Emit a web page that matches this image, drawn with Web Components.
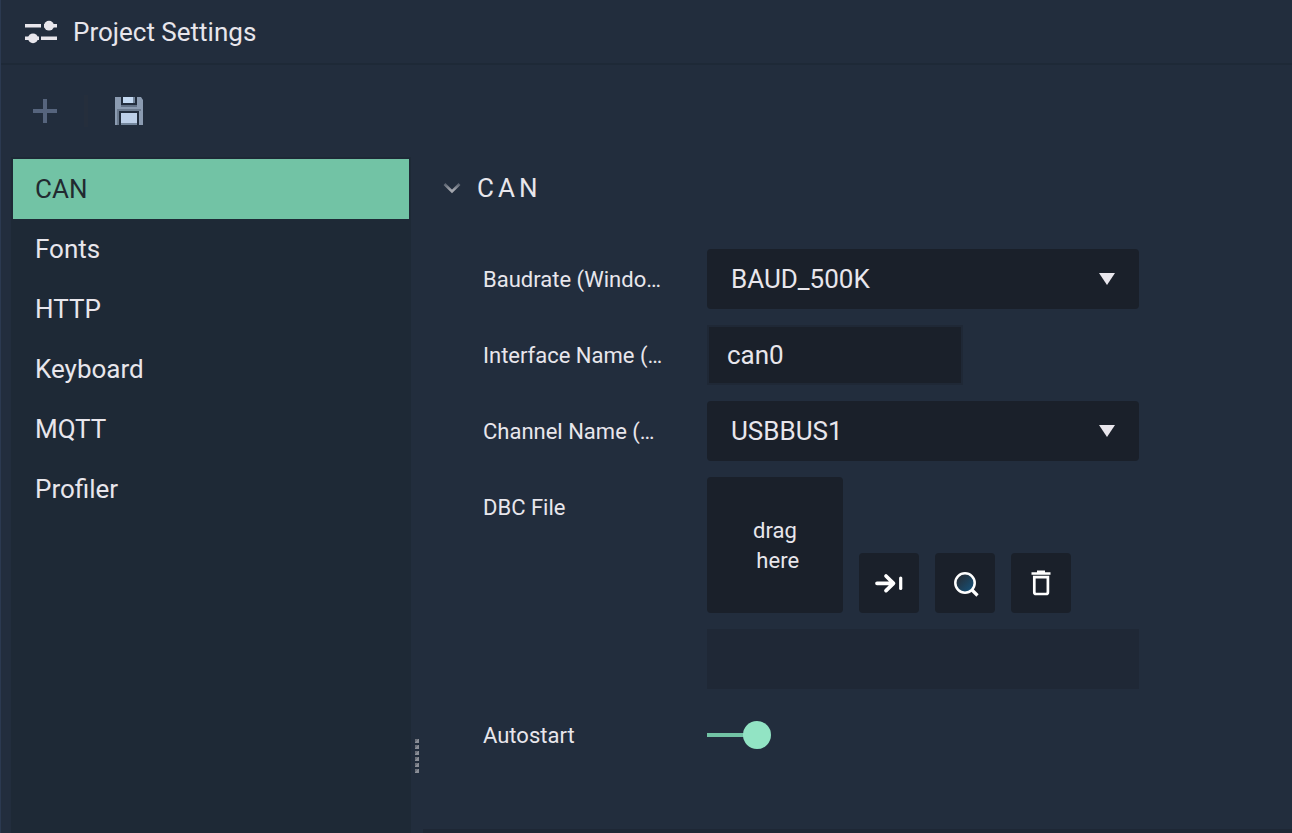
<!DOCTYPE html>
<html lang="en">
<head>
<meta charset="utf-8">
<title>Project Settings</title>
<style>
  :root {
    --bg: #222d3d;
    --panel: #1e2936;
    --field: #1a202a;
    --line: #1e2937;
    --text: #e8e6ec;
    --accent: #72c3a5;
    --accent-bright: #92e4c4;
  }
  html, body { height: 100%; }
  body {
    margin: 0;
    background: var(--bg);
    color: var(--text);
    font-family: Roboto, "Liberation Sans", sans-serif;
    font-size: 26px;
    line-height: 30px;
  }
</style>
</head>
<body>
<settings-window></settings-window>

<script>
const define = (name, html, setup) => {
  const template = document.createElement('template');
  template.innerHTML = `<style>*{box-sizing:border-box}</style>${html}`;
  customElements.define(name, class extends HTMLElement {
    constructor() {
      super();
      this.attachShadow({ mode: 'open' }).append(template.content.cloneNode(true));
    }
    connectedCallback() { if (setup) setup(this, this.shadowRoot); }
  });
};

define('window-header', `
  <style>
    :host { display: block; }
    header { display: flex; align-items: center; gap: 16px; height: 65px; padding: 1px 23px 0; border-bottom: 2px solid var(--line); }
    h1 { margin: 0; font-size: 26px; font-weight: 400; line-height: 30px; }
  </style>
  <header>
    <svg width="33" height="24" viewBox="0 0 33 24" fill="#e8e6ec" aria-hidden="true">
      <rect x="1" y="4" width="16" height="3.500"/><rect x="20" y="4" width="13" height="3.500"/><circle cx="25" cy="5.700" r="4.900"/>
      <rect x="1" y="16.500" width="14" height="3.500"/><rect x="17" y="16.500" width="16" height="3.500"/><circle cx="9" cy="18.300" r="4.900"/>
    </svg>
    <h1><slot></slot></h1>
  </header>`);

define('tool-bar', `
  <style>
    :host { display: flex; align-items: center; gap: 24px; height: 92px; padding: 0 27px; }
    button { display: flex; align-items: center; justify-content: center; width: 32px; height: 32px; margin: 0; padding: 0; border: 0; background: none; }
    i { width: 4px; height: 32px; background: #252e3c; }
  </style>
  <button type="button" aria-label="Add">
    <svg width="32" height="32" viewBox="0 0 32 32"><path d="M15 4h4v10h10v4H19v10h-4V18H5v-4h10z" fill="#56647d"/></svg>
  </button>
  <i></i>
  <button type="button" aria-label="Save">
    <svg width="32" height="32" viewBox="0 0 32 32">
      <path d="M3 2h26l2 3v25H3z" fill="#8b9bb1"/>
      <path d="M9 2h16v9H9z" fill="#222d3d"/><path d="M11 2h10v6h-10z" fill="#c4d9f2"/><path d="M21 2h2v6h-2z" fill="#74869c"/>
      <path d="M9 10h16v2H9z" fill="#627186"/>
      <path d="M7 16h20v14H7z" fill="#222d3d"/><path d="M5 14h24v2H5zM5 16h2v14H5z" fill="#6b7a8e"/>
      <path d="M9 18h16v10H9z" fill="#bdcfe8"/><path d="M9 28h16v2H9z" fill="#74869c"/>
    </svg>
  </button>`);

define('category-item', `
  <style>
    :host { display: block; }
    button { display: block; width: 100%; height: 60px; margin: 0; padding: 0 22px; border: 0; background: none; color: inherit; font: inherit; text-align: left; }
    :host([selected]) button { background: var(--accent); color: #222a30; }
  </style>
  <button type="button"><slot></slot></button>`);

define('category-list', `
  <style>
    :host { display: block; background: var(--panel); padding: 2px; }
    nav { display: flex; flex-direction: column; }
  </style>
  <nav aria-label="Categories"><slot></slot></nav>`);

define('split-grip', `
  <style>
    :host { display: flex; flex-direction: column; justify-content: flex-end; align-items: center; gap: 2px; width: 12px; padding-bottom: 60px; }
    i { width: 4px; height: 4px; background: linear-gradient(135deg, #6d717b 50%, #898d96 50%); }
  </style>
  <i></i><i></i><i></i><i></i><i></i><i></i>`);

define('settings-group', `
  <style>
    :host { display: block; }
    h2 { display: flex; align-items: center; gap: 16px; height: 60px; margin: 0 0 32px; padding-top: 2px; font-size: 26px; font-weight: 400; line-height: 30px; letter-spacing: 4px; }
    div { display: flex; flex-direction: column; gap: 16px; padding-left: 40px; }
  </style>
  <h2>
    <svg width="18" height="14" viewBox="0 0 18 14" fill="none" aria-hidden="true">
      <defs><linearGradient id="fade" x1="0" y1="0" x2="0" y2="1"><stop offset="0" stop-color="#5a626f"/><stop offset=".8" stop-color="#a3a6ae"/></linearGradient></defs>
      <path d="M1.500 3l7.500 7.500 7.500-7.500" stroke="url(#fade)" stroke-width="2.600"/></svg>
    <slot name="title"></slot>
  </h2>
  <div><slot></slot></div>`);

const row = `
  :host { display: grid; grid-template-columns: 224px minmax(0, 432px); align-items: start; }
  label { height: 60px; font-size: 22px; line-height: 62px; white-space: nowrap; }`;

define('select-field', `
  <style>${row}
    .box { display: grid; grid-template: 60px / 1fr; align-items: center; }
    select, svg { grid-area: 1 / 1; }
    select { appearance: none; width: 100%; height: 60px; margin: 0; padding: 0 24px; border: 0; border-radius: 4px; background: var(--field); color: inherit; font: inherit; }
    svg { justify-self: end; margin-right: 24px; pointer-events: none; }
  </style>
  <label for="f"></label>
  <div class="box"><select id="f"><option></option></select>
    <svg width="16" height="12" viewBox="0 0 16 12"><path d="M0 0h16L8 12z" fill="#e8e6ec"/></svg></div>`,
  (el, root) => {
    root.querySelector('label').textContent = el.getAttribute('label');
    root.querySelector('option').textContent = el.getAttribute('value');
  });

define('text-field', `
  <style>${row}
    input { width: 256px; height: 60px; margin: 0; padding: 0 18px; border: 2px solid #1f2836; background: var(--field); color: inherit; font: inherit; }
  </style>
  <label for="f"></label><input id="f" type="text">`,
  (el, root) => {
    root.querySelector('label').textContent = el.getAttribute('label');
    root.querySelector('input').value = el.getAttribute('value');
  });

define('file-field', `
  <style>${row}
    .body { display: flex; flex-direction: column; gap: 16px; }
    .tools { display: flex; align-items: flex-end; gap: 16px; }
    .drop { display: flex; align-items: center; justify-content: center; width: 136px; height: 136px; padding-top: 2px; border-radius: 4px; background: var(--field); font-size: 22px; line-height: 30px; text-align: center; white-space: pre; }
    button { display: flex; align-items: center; justify-content: center; width: 60px; height: 60px; margin: 0; padding: 0; border: 0; border-radius: 4px; background: var(--field); }
    input { width: 100%; height: 60px; margin: 0; padding: 0 18px; border: 0; background: #1f2836; color: inherit; font: inherit; }
  </style>
  <label for="f"></label>
  <div class="body">
    <div class="tools">
      <div class="drop">drag\n here</div>
      <button type="button" aria-label="Assign">
        <svg width="32" height="32" viewBox="0 0 32 32" fill="none" stroke="#fff" stroke-linecap="round"><path d="M4 16.300h16M13 9l7.500 7.300-7.500 7.300" stroke-width="3.700" stroke-linejoin="round"/><path d="M27.700 11v10.500" stroke-width="3.200"/></svg>
      </button>
      <button type="button" aria-label="Search">
        <svg width="32" height="32" viewBox="0 0 32 32" fill="none" stroke="#fff">
          <defs><linearGradient id="lens" x1="0" y1="0" x2="1" y2="1"><stop offset=".2" stop-color="#252f3a"/><stop offset=".85" stop-color="#164f75"/></linearGradient></defs>
          <circle cx="16" cy="16" r="9.700" fill="url(#lens)" stroke-width="2.500"/><path d="M22.500 22.500l6 6" stroke-width="3.200"/></svg>
      </button>
      <button type="button" aria-label="Delete">
        <svg width="32" height="32" viewBox="0 0 32 32" fill="none" stroke="#fff"><path d="M6.500 6.500h19M12 4.700h8" stroke-width="2.500"/><path d="M9.300 10.200h13.600v15q0 1.800-1.800 1.800h-10q-1.800 0-1.800-1.800z" stroke-width="2.700"/></svg>
      </button>
    </div>
    <input id="f" type="text" readonly>
  </div>`,
  (el, root) => { root.querySelector('label').textContent = el.getAttribute('label'); });

define('toggle-field', `
  <style>${row}
    :host { align-items: center; }
    input { appearance: none; display: flex; align-items: center; width: 64px; height: 28px; margin: 0; background: linear-gradient(var(--accent), var(--accent)) left center / 40px 4px no-repeat; }
    input::after { content: ""; width: 28px; height: 28px; margin-left: auto; border-radius: 50%; background: var(--accent-bright); }
  </style>
  <label for="f"></label><input id="f" type="checkbox" role="switch" checked>`,
  (el, root) => { root.querySelector('label').textContent = el.getAttribute('label'); });

define('settings-window', `
  <style>
    :host { display: flex; flex-direction: column; min-height: 100%; border-left: 1px solid #2b3950; }
    .body { flex: 1; display: grid; grid-template-columns: 400px 12px minmax(0, 1fr); padding-left: 10px; }
    main { padding: 0 20px; border-bottom: 4px solid #1e2735; }
  </style>
  <window-header>Project Settings</window-header>
  <tool-bar></tool-bar>
  <div class="body">
    <category-list>
      <category-item selected>CAN</category-item>
      <category-item>Fonts</category-item>
      <category-item>HTTP</category-item>
      <category-item>Keyboard</category-item>
      <category-item>MQTT</category-item>
      <category-item>Profiler</category-item>
    </category-list>
    <split-grip></split-grip>
    <main>
      <settings-group>
        <span slot="title">CAN</span>
        <select-field label="Baudrate (Windo…" value="BAUD_500K"></select-field>
        <text-field label="Interface Name (…" value="can0"></text-field>
        <select-field label="Channel Name (…" value="USBBUS1"></select-field>
        <file-field label="DBC File"></file-field>
        <toggle-field label="Autostart"></toggle-field>
      </settings-group>
    </main>
  </div>`);
</script>
</body>
</html>
